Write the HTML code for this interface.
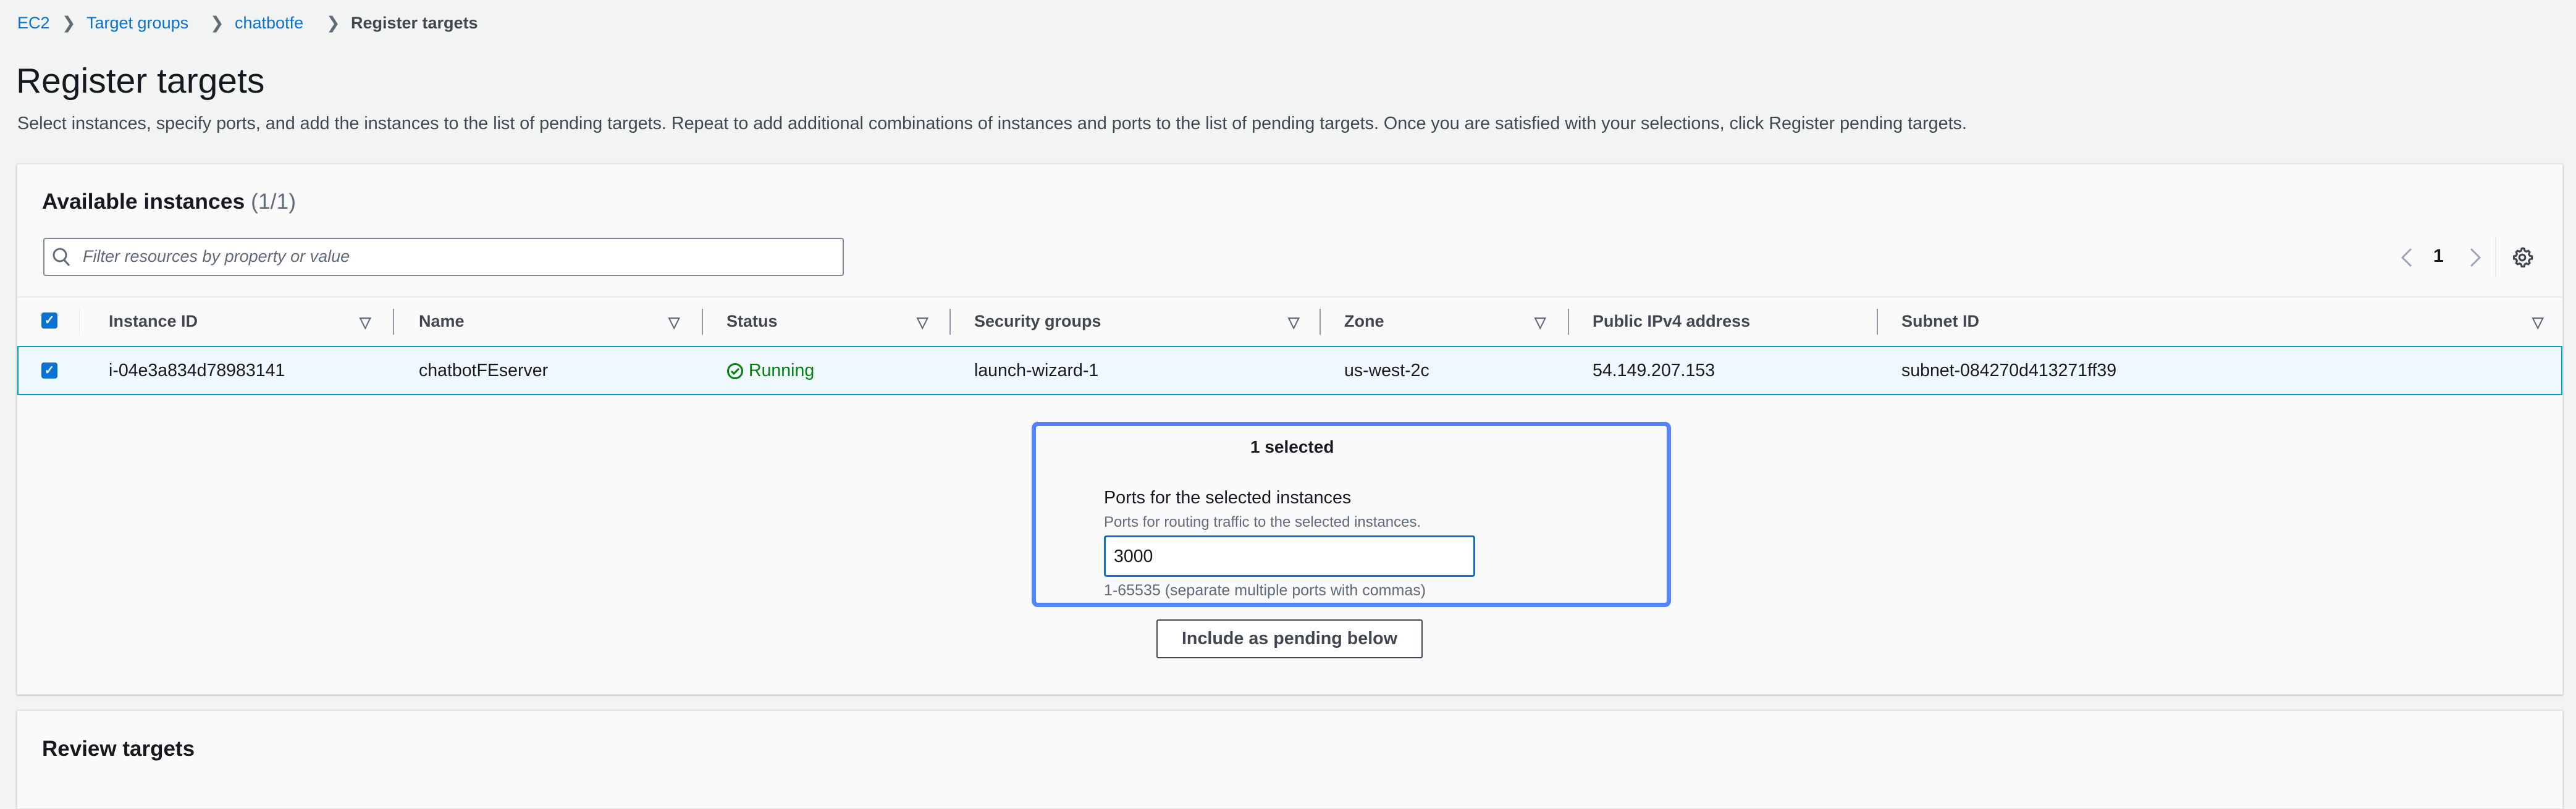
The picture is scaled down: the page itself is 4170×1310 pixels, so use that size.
<!DOCTYPE html>
<html><head><meta charset="utf-8"><style>
*{box-sizing:border-box;margin:0;padding:0}
body{width:4170px;height:1284px;background:#f2f3f3;font-family:"Liberation Sans",sans-serif;position:relative;overflow:hidden;color:#16191f}
.a{position:absolute;white-space:nowrap}
.bc{font-size:27px;top:22px}
.link{color:#0972d3}
.panel{position:absolute;background:#fafafa;border:1px solid #e3e3e3;box-shadow:0 1px 3px rgba(0,0,0,.25)}
.th{font-size:27px;font-weight:bold;color:#414750;top:505px}
.td{font-size:28.5px;top:584px;color:#16191f}
.sep{position:absolute;width:2px;background:#8d99a8;top:500px;height:42px}
.fi{position:absolute;top:508px;font-size:24px;color:#5f6b7a;font-weight:bold}
.cb{position:absolute;width:26px;height:26px;background:#0972d3;border-radius:4px;color:#fff;font-size:20px;text-align:center;line-height:26px;font-weight:bold}
</style></head><body>
<div class="a bc link" style="left:28px">EC2</div>
<div class="a bc" style="left:100px;color:#5f6b7a">&#x276F;</div>
<div class="a bc link" style="left:140px">Target groups</div>
<div class="a bc" style="left:340px;color:#5f6b7a">&#x276F;</div>
<div class="a bc link" style="left:380px">chatbotfe</div>
<div class="a bc" style="left:528px;color:#5f6b7a">&#x276F;</div>
<div class="a bc" style="left:568px;color:#414750;font-weight:bold">Register targets</div>
<div class="a" style="left:26px;top:98px;font-size:57px">Register targets</div>
<div class="a" style="left:28px;top:184px;font-size:28.7px;color:#414750">Select instances, specify ports, and add the instances to the list of pending targets. Repeat to add additional combinations of instances and ports to the list of pending targets. Once you are satisfied with your selections, click Register pending targets.</div>

<div class="panel" style="left:27px;top:265px;width:4122px;height:860px">
<div class="a" style="left:40px;top:40px;font-size:35.5px;font-weight:bold">Available instances <span style="font-weight:normal;color:#5f6b7a">(1/1)</span></div>
<div class="a" style="left:42px;top:119px;width:1296px;height:62px;background:#fff;border:2px solid #7d8998;border-radius:4px"></div>
<svg class="a" style="left:56px;top:134px" width="32" height="34" viewBox="0 0 32 34"><circle cx="13" cy="13" r="10" fill="none" stroke="#5f6b7a" stroke-width="3"/><path d="M20 21l8 9" stroke="#5f6b7a" stroke-width="3"/></svg>
<div class="a" style="left:106px;top:134px;font-size:27px;font-style:italic;color:#5f6b7a">Filter resources by property or value</div>
<svg class="a" style="left:3853px;top:134px" width="30" height="34"><path d="M22 3L8 17l14 14" fill="none" stroke="#9ba7b6" stroke-width="3"/></svg>
<div class="a" style="left:3911px;top:132px;font-size:30px;font-weight:bold">1</div>
<svg class="a" style="left:3964px;top:134px" width="30" height="34"><path d="M8 3l14 14L8 31" fill="none" stroke="#9ba7b6" stroke-width="3"/></svg>
<div class="a" style="left:4011px;top:118px;width:2px;height:64px;background:#e9ebed"></div>
<svg class="a" style="left:4036px;top:132px" width="38" height="38" viewBox="0 0 24 24"><path d="M12 2.5l2 .3.5 2.2 1.6.9 2.1-.8 1.4 1.4-.8 2.1.9 1.6 2.2.5v2.6l-2.2.5-.9 1.6.8 2.1-1.4 1.4-2.1-.8-1.6.9-.5 2.2h-2.6l-.5-2.2-1.6-.9-2.1.8-1.4-1.4.8-2.1-.9-1.6-2.2-.5v-2.6l2.2-.5.9-1.6-.8-2.1 1.4-1.4 2.1.8 1.6-.9.5-2.2z" fill="none" stroke="#414750" stroke-width="2"/><circle cx="12" cy="12" r="3" fill="none" stroke="#414750" stroke-width="2"/></svg>
<div class="a" style="left:0;top:214px;width:4120px;height:2px;background:#e9ebed"></div>
</div>

<div class="cb" style="left:67px;top:506px">&#10003;</div>
<div class="a" style="left:128px;top:500px;width:1px;height:42px;background:#e9ebed"></div>
<div class="a th" style="left:176px">Instance ID</div><div class="fi" style="left:582px">&#9661;</div><div class="sep" style="left:636px"></div>
<div class="a th" style="left:678px">Name</div><div class="fi" style="left:1082px">&#9661;</div><div class="sep" style="left:1136px"></div>
<div class="a th" style="left:1176px">Status</div><div class="fi" style="left:1484px">&#9661;</div><div class="sep" style="left:1537px"></div>
<div class="a th" style="left:1577px">Security groups</div><div class="fi" style="left:2085px">&#9661;</div><div class="sep" style="left:2136px"></div>
<div class="a th" style="left:2176px">Zone</div><div class="fi" style="left:2484px">&#9661;</div><div class="sep" style="left:2538px"></div>
<div class="a th" style="left:2578px">Public IPv4 address</div><div class="sep" style="left:3038px"></div>
<div class="a th" style="left:3078px">Subnet ID</div><div class="fi" style="left:4099px">&#9661;</div>

<div class="a" style="left:28px;top:560px;width:4120px;height:80px;background:#f0f8ff;border:2px solid #00a1c9"></div>
<div class="cb" style="left:67px;top:587px">&#10003;</div>
<div class="a td" style="left:176px">i-04e3a834d78983141</div>
<div class="a td" style="left:678px">chatbotFEserver</div>
<svg class="a" style="left:1176px;top:587px" width="28" height="28" viewBox="0 0 28 28"><circle cx="14" cy="14" r="11.5" fill="none" stroke="#037f0c" stroke-width="3"/><path d="M8 14l4 4 8-8" fill="none" stroke="#037f0c" stroke-width="3"/></svg>
<div class="a td" style="left:1212px;color:#037f0c">Running</div>
<div class="a td" style="left:1577px">launch-wizard-1</div>
<div class="a td" style="left:2176px">us-west-2c</div>
<div class="a td" style="left:2578px">54.149.207.153</div>
<div class="a td" style="left:3078px">subnet-084270d413271ff39</div>

<div class="a" style="left:1670px;top:683px;width:1035px;height:300px;border:7px solid #5384f9;border-radius:10px"></div>
<div class="a" style="left:2024px;top:708px;font-size:28px;font-weight:bold">1 selected</div>
<div class="a" style="left:1787px;top:790px;font-size:28.7px">Ports for the selected instances</div>
<div class="a" style="left:1787px;top:832px;font-size:24px;color:#5f6b7a">Ports for routing traffic to the selected instances.</div>
<div class="a" style="left:1787px;top:867px;width:601px;height:67px;background:#fff;border:3px solid #0972d3;border-radius:4px"></div>
<div class="a" style="left:1803px;top:885px;font-size:28.5px">3000</div>
<div class="a" style="left:1787px;top:942px;font-size:25px;color:#5f6b7a">1-65535 (separate multiple ports with commas)</div>
<div class="a" style="left:1872px;top:1003px;width:431px;height:63px;background:#fff;border:2px solid #414750;border-radius:3px;text-align:center;line-height:59px;font-size:28.7px;font-weight:bold;color:#414750">Include as pending below</div>

<div class="panel" style="left:27px;top:1150px;width:4122px;height:160px">
<div class="a" style="left:40px;top:42px;font-size:35px;font-weight:bold">Review targets</div>
</div>
</body></html>
